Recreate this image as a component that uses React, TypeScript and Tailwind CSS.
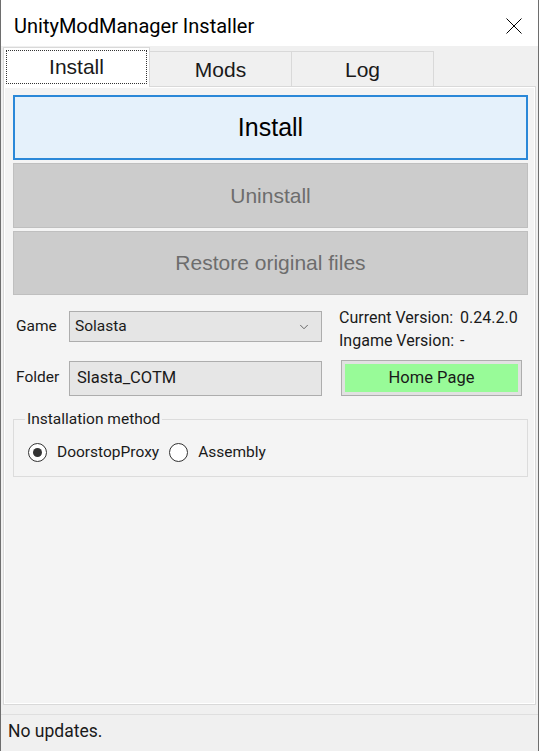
import { ChevronDown } from "lucide-react";

const ui = { fontFamily: "Roboto, 'Liberation Sans', sans-serif" };
const sans = { fontFamily: "'Liberation Sans', Arial, sans-serif" };

function Radio({ checked, label }: { checked?: boolean; label: string }) {
	return (
		<div className="flex items-center gap-[10px]">
			<span className="w-[19px] h-[19px] rounded-full border border-[#333333] bg-white flex items-center justify-center">
				{checked && <span className="w-[9px] h-[9px] rounded-full bg-[#333333]" />}
			</span>
			<span className="text-[15.5px] text-[#1a1a1a]">{label}</span>
		</div>
	);
}

export default function App() {
	return (
		<div
			className="w-[539px] h-[751px] flex flex-col bg-[#f0f0f0] border-x border-[#6e6e6e] overflow-hidden"
			style={ui}
		>
			{/* title bar */}
			<div className="h-[46px] shrink-0 bg-white flex items-center justify-between pl-[13px] pr-[16px] pt-[5px]">
				<span className="text-[20px] text-black">UnityModManager Installer</span>
				<svg width="16" height="16" viewBox="0 0 16 16">
					<path d="M0.5 0.5 L15.5 15.5 M15.5 0.5 L0.5 15.5" stroke="#000" strokeWidth="1" />
				</svg>
			</div>

			{/* tabs */}
			<div className="h-[40px] shrink-0 flex items-end pl-[2px]" style={sans}>
				<div className="relative z-10 -mb-[1px] w-[147px] h-[40px] bg-white border-x border-t border-[#d9d9d9] p-[2px] pb-[3px]">
					<div className="h-full border border-dotted border-[#333333] flex items-center justify-center text-[21px] text-[#1a1a1a]">
						Install
					</div>
				</div>
				<div className="w-[142px] h-[35px] border-t border-r border-[#d9d9d9] flex items-center justify-center text-[21px] text-[#1a1a1a] pt-[2px]">
					Mods
				</div>
				<div className="w-[142px] h-[35px] border-t border-r border-[#d9d9d9] flex items-center justify-center text-[21px] text-[#1a1a1a] pt-[2px]">
					Log
				</div>
			</div>

			{/* tab page */}
			<div className="ml-[2px] w-[533px] h-[619px] shrink-0 border border-[#d9d9d9] bg-[#f4f4f4] shadow-[inset_0_0_0_1px_#ffffff] pl-[9px] pr-[7px] pt-[8px]">
				<div className="flex flex-col gap-[3px]" style={sans}>
					<div className="h-[65px] bg-[#e5f1fb] border-2 border-[#2b88d8] flex items-center justify-center text-[25px] text-black">
						Install
					</div>
					<div className="h-[65px] bg-[#cccccc] border border-[#bfbfbf] flex items-center justify-center text-[21px] text-[#6d6d6d]">
						Uninstall
					</div>
					<div className="h-[64px] bg-[#cccccc] border border-[#bfbfbf] flex items-center justify-center text-[21px] text-[#6d6d6d]">
						Restore original files
					</div>
				</div>

				{/* game row */}
				<div className="mt-[11px] flex items-start text-[15.5px] text-[#1a1a1a]">
					<div className="w-[56px] pl-[3px] mt-[5px] h-[31px] flex items-center">Game</div>
					<div className="mt-[5px] w-[253px] h-[31px] bg-[#e5e5e5] border border-[#adadad] flex items-center justify-between pl-[5px] pr-[10px]">
						<span>Solasta</span>
						<ChevronDown size={14} strokeWidth={1.5} className="text-[#555555]" />
					</div>
					<div className="ml-[17px] grid grid-cols-[121px_auto] leading-[23px] text-[16px]">
						<span>Current Version:</span>
						<span>0.24.2.0</span>
						<span>Ingame Version:</span>
						<span>-</span>
					</div>
				</div>

				{/* folder row */}
				<div className="mt-[8px] flex items-center text-[15.5px] text-[#1a1a1a]">
					<div className="w-[56px] pl-[3px]">Folder</div>
					<div className="w-[253px] h-[35px] bg-[#e6e6e6] border border-[#adadad] flex items-center pl-[7px] text-[16.5px]">
						Slasta_COTM
					</div>
					<div className="ml-[19px] w-[181px] h-[36px] bg-[#e1e1e1] border border-[#adadad] p-[3px]">
						<div className="h-full bg-[#98fb98] flex items-center justify-center text-[16.5px]">Home Page</div>
					</div>
				</div>

				{/* installation method */}
				<fieldset className="mt-[13px] border border-[#dcdcdc] pl-[14px] pb-[12px] text-[15.5px] text-[#1a1a1a]">
					<legend className="-ml-[3px] px-[2px] leading-[20px]">Installation method</legend>
					<div className="mt-[12px] flex items-center gap-[10px]">
						<Radio checked label="DoorstopProxy" />
						<Radio label="Assembly" />
					</div>
				</fieldset>
			</div>

			{/* status bar */}
			<div className="mt-[9px] border-t border-[#dfdfdf] flex-1 flex items-center pl-[7px] pb-[4px] text-[17.5px] text-[#1a1a1a]">
				No updates.
			</div>
		</div>
	);
}
